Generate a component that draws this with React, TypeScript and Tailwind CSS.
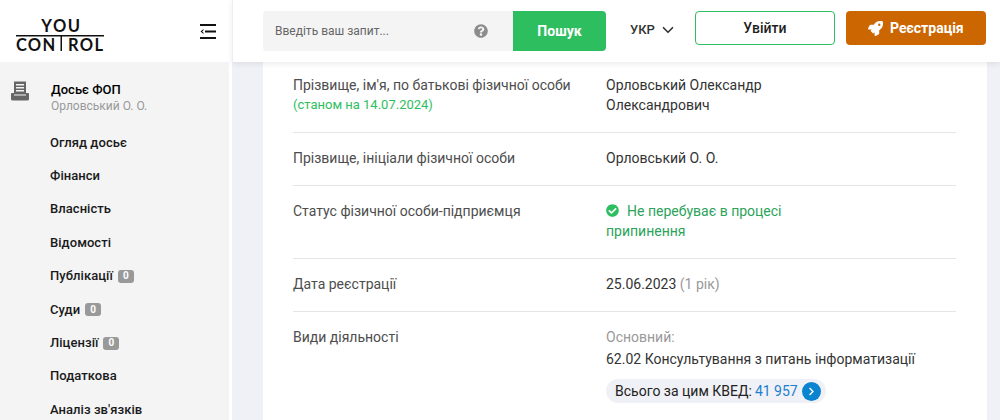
import { ChevronDown } from 'lucide-react';
import { FaCheckCircle, FaChevronRight, FaQuestionCircle, FaRocket } from 'react-icons/fa';

const navItems = [
  { label: 'Огляд досьє' },
  { label: 'Фінанси' },
  { label: 'Власність' },
  { label: 'Відомості' },
  { label: 'Публікації', count: 0 },
  { label: 'Суди', count: 0 },
  { label: 'Ліцензії', count: 0 },
  { label: 'Податкова' },
  { label: 'Аналіз зв\'язків' },
];

function Logo() {
  return (
    <svg width="90" height="50" viewBox="0 0 90 50" className="text-[#111111]">
      <text x="45.5" y="26" textAnchor="middle" fontFamily="Lato, sans-serif" fontSize="16.5" fontWeight="700" letterSpacing="1.6" fill="currentColor">YOU</text>
      <rect x="0" y="29" width="88" height="1.5" fill="currentColor" />
      <text x="0" y="45" fontFamily="Lato, sans-serif" fontSize="16.5" fontWeight="700" letterSpacing="1.2" fill="currentColor">CON</text>
      <rect x="44.5" y="30" width="1.5" height="15" fill="currentColor" />
      <text x="52" y="45" fontFamily="Lato, sans-serif" fontSize="16.5" fontWeight="700" letterSpacing="1.4" fill="currentColor">ROL</text>
    </svg>
  );
}

function CollapseIcon() {
  return (
    <svg width="16" height="15" viewBox="0 0 16 15" fill="currentColor" className="text-[#111111]">
      <rect x="0" y="0" width="16" height="2" />
      <rect x="5" y="6.5" width="11" height="2" />
      <rect x="0" y="13" width="16" height="2" />
      <path d="M0.5 7.5 L3.5 5 V6.2 L2.2 7.5 L3.5 8.8 V10 Z" />
    </svg>
  );
}

function DossierIcon() {
  return (
    <svg width="18" height="20" viewBox="0 0 18 20" className="text-[#666666]">
      <path fill="currentColor" d="M3 0.5 H15 V12 H17 Q18 12 18 13 V18 Q18 19.5 16.5 19.5 H1.5 Q0 19.5 0 18 V13 Q0 12 1 12 H3 Z" />
      <path fill="#f4f4f5" d="M5 3 H13 V4.5 H5 Z M5 6 H13 V7.5 H5 Z M5 9 H13 V10.5 H5 Z M3 13.5 H15 V14.5 H3 Z" />
    </svg>
  );
}

function Row({ label, note, children, last }: { label: string; note?: string; children: React.ReactNode; last?: boolean }) {
  return (
    <div className={`flex pb-[17px] pt-[15px] leading-5 ${last ? '' : 'border-b border-[#e5e5e5]'}`}>
      <div className="w-[313px] shrink-0 text-[#4d4d4d]">
        <p>{label}</p>
        {note && <p className="text-[13px] text-[#2dbe60]">{note}</p>}
      </div>
      <div className="w-[240px] grow text-[#333333]">{children}</div>
    </div>
  );
}

export default function App() {
  return (
    <div className="flex h-[420px] w-[1000px] overflow-hidden bg-[#f0f1f6] font-['Roboto',sans-serif] text-sm">
      <aside className="flex w-[232px] shrink-0 flex-col bg-white">
        <div className="flex h-[62px] shrink-0 items-center justify-between pl-4 pr-4">
          <Logo />
          <CollapseIcon />
        </div>
        <div className="mr-[3px] grow bg-[#f4f4f5]">
          <div className="flex gap-[22px] pl-[11px] pt-[19px]">
            <DossierIcon />
            <div>
              <p className="text-[13px] font-medium leading-[18px] text-black">Досьє ФОП</p>
              <p className="text-xs leading-[15px] text-[#999999]">Орловський О. О.</p>
            </div>
          </div>
          <nav className="flex flex-col gap-[14.4px] pl-[50px] pt-[19.4px]">
            {navItems.map((item) => (
              <div key={item.label} className="flex h-[19px] items-center gap-[5px] text-[13px] font-medium tracking-[0.05px] text-[#1a1a1a]">
                {item.label}
                {item.count !== undefined && (
                  <span className="flex h-[13px] w-4 items-center justify-center rounded-[3px] bg-[#999999] text-[10px] font-bold text-white">{item.count}</span>
                )}
              </div>
            ))}
          </nav>
        </div>
      </aside>

      <div className="flex grow flex-col">
        <header className="z-10 flex h-[62px] shrink-0 items-start border-l border-[#eeeeee] bg-white pl-[30px] pt-[11px] shadow-[0_2px_6px_rgba(0,0,0,0.08)]">
          <div className="flex h-10 w-[250px] items-center justify-between rounded-l bg-[#f4f4f5] pl-3 pr-[25px] text-xs text-[#666666]">
            Введіть ваш запит...
            <FaQuestionCircle className="text-sm text-[#8c8c8c]" />
          </div>
          <button className="h-10 w-[93px] rounded-r bg-[#2dbe60] text-sm font-bold text-white">Пошук</button>
          <div className="ml-[24px] flex h-[38px] items-center gap-[4px] text-[13px] font-medium text-[#333333]">
            УКР
            <ChevronDown size={18} strokeWidth={2.2} />
          </div>
          <button className="ml-[18px] h-[34px] w-[140px] rounded border border-[#2dbe60] text-sm font-medium text-[#222222]">Увійти</button>
          <button className="ml-[11px] flex h-[34px] w-[140px] items-center justify-center gap-[7px] rounded bg-[#cc6600] text-sm font-bold text-white">
            <FaRocket className="text-[15px]" />
            Реєстрація
          </button>
        </header>

        <main className="ml-[31px] mr-[13px] mt-[-2px] grow bg-white pl-[30px] pr-[31px]">
          <Row label="Прізвище, ім'я, по батькові фізичної особи" note="(станом на 14.07.2024)">
            Орловський Олександр
            <br />
            Олександрович
          </Row>
          <Row label="Прізвище, ініціали фізичної особи">Орловський О. О.</Row>
          <Row label="Статус фізичної особи-підприємця">
            <p className="text-[#2ba35a]">
              <FaCheckCircle className="mr-[8px] inline-block align-[-1px] text-[13px] text-[#2dbe60]" />
              Не перебуває в процесі
              <br />
              припинення
            </p>
          </Row>
          <Row label="Дата реєстрації">
            25.06.2023 <span className="text-[#999999]">(1 рік)</span>
          </Row>
          <Row label="Види діяльності" last>
            <p className="text-[#999999]">Основний:</p>
            <p className="mt-[2px]">62.02 Консультування з питань інформатизації</p>
            <div className="mt-[10px] inline-flex h-6 items-center gap-[3px] rounded-full bg-[#f0f1f6] pl-[9px] pr-[5px] text-[#222222]">
              Всього за цим КВЕД: <span className="text-[#1a7fd0]">41 957</span>
              <span className="ml-px flex h-[19px] w-[19px] items-center justify-center rounded-full bg-[#0a84d0] text-[9px] text-white">
                <FaChevronRight />
              </span>
            </div>
          </Row>
        </main>
      </div>
    </div>
  );
}
